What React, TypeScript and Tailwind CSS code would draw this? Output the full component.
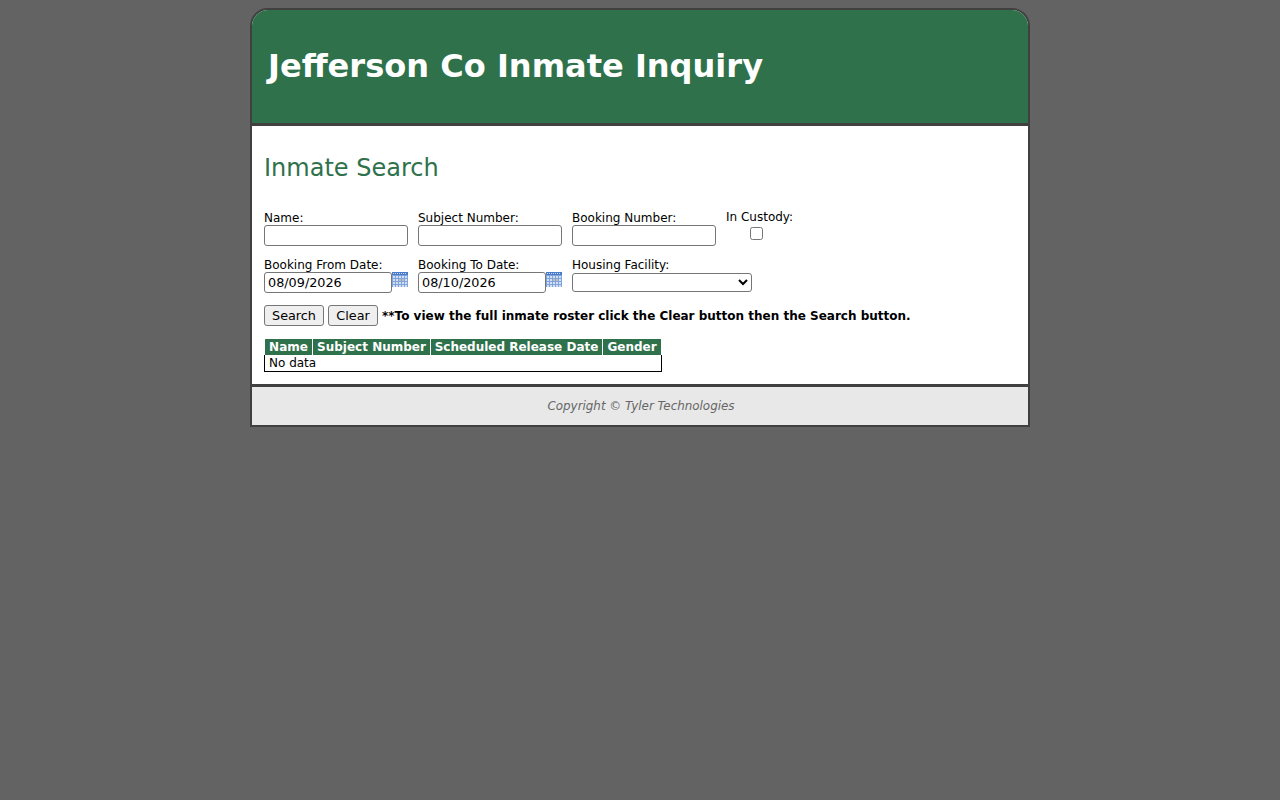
export default function App() {
  const Cal = () => (
    <svg width="16" height="16" viewBox="0 0 16 16" className="block" shapeRendering="crispEdges">
      <rect x="0" y="0" width="16" height="15" fill="#7fa3dc" />
      <rect x="0" y="0" width="16" height="3" fill="#4a7bc9" />
      {[1, 3, 5, 7, 9, 11, 13].map((x) => (
        <rect key={x} x={x} y="1" width="1" height="1" fill="#c9dcf7" />
      ))}
      {[4, 7, 10, 13].map((y) =>
        [1, 4, 7, 10, 13].map((x) => (
          <rect key={`${x}-${y}`} x={x} y={y} width="2" height="2" fill={(x === 10 || x === 7) && y === 7 ? "#c4bfb0" : "#d3e0f3"} />
        ))
      )}
    </svg>
  );
  const input = "block h-[21px] border border-[#767676] rounded-[3px] bg-white px-[3px] text-[12.8px] text-black outline-none";
  return (
    <div className="min-h-[800px] bg-[#636363] pt-2 text-[12px] leading-[15px] text-black font-['DejaVu_Sans',sans-serif]">
      <div className="mx-auto w-[780px] border-2 border-[#404040] rounded-t-[18px] bg-white">
        <div className="flex h-[113px] items-center rounded-t-[16px] bg-[#2f714b] pb-[1px] pl-[15px]">
          <h1 className="pl-[1px] text-[32.05px] font-bold leading-[38px] text-white">Jefferson Co Inmate Inquiry</h1>
        </div>
        <div className="h-[3px] bg-[#404040]" />
        <div className="h-[258px] px-3 pt-[26px]">
          <h2 className="text-[24px] leading-[32px] text-[#2f714b]">Inmate Search</h2>
          <div className="mt-[25px] flex items-start gap-[10px]">
            <label className="block w-[144px] pt-[2px] leading-[14px]">Name:<input className={`${input} w-[144px]`} /></label>
            <label className="block w-[144px] pt-[2px] leading-[14px]">Subject Number:<input className={`${input} w-[144px]`} /></label>
            <label className="block w-[144px] pt-[2px] leading-[14px]">Booking Number:<input className={`${input} w-[144px]`} /></label>
            <label className="block pt-[1px] leading-[14px]">
              In Custody:
              <input type="checkbox" className="ml-[24px] mt-[3px] block h-[13px] w-[13px] appearance-auto" />
            </label>
          </div>
          <div className="mt-[11px] flex items-start gap-[10px]">
            <div className="w-[144px] pt-[1px] leading-[14px]">
              Booking From Date:
              <div className="flex items-start">
                <input defaultValue="08/09/2026" className={`${input} w-[128px]`} />
                <Cal />
              </div>
            </div>
            <div className="w-[144px] pt-[1px] leading-[14px]">
              Booking To Date:
              <div className="flex items-start">
                <input defaultValue="08/10/2026" className={`${input} w-[128px]`} />
                <Cal />
              </div>
            </div>
            <label className="block pt-[1px]">
              Housing Facility:
              <select className="block h-[19px] w-[180px] appearance-auto border border-[#767676] rounded-[3px] bg-white text-[12.8px]">
                <option></option>
              </select>
            </label>
          </div>
          <div className="mt-[12px] flex items-center gap-1">
            <button className="h-[21px] w-[60px] rounded-[3px] border border-[#767676] bg-[#efefef] text-[12.8px] text-black">Search</button>
            <button className="h-[21px] w-[50px] rounded-[3px] border border-[#767676] bg-[#efefef] text-[12.8px] text-black">Clear</button>
            <b className="pt-[1px]">**To view the full inmate roster click the Clear button then the Search button.</b>
          </div>
          <table className="mt-[13px] w-[398px] table-fixed border-separate border-spacing-0 whitespace-nowrap text-[12px] leading-[15px]">
            <thead>
              <tr className="text-white">
                <th className="h-[16px] w-[48px] border-l border-white bg-[#2f714b] p-0 font-bold">Name</th>
                <th className="w-[118px] border-l border-white bg-[#2f714b] p-0 font-bold">Subject Number</th>
                <th className="w-[172px] border-l border-white bg-[#2f714b] p-0 font-bold">Scheduled Release Date</th>
                <th className="w-[60px] border-x border-white bg-[#2f714b] p-0 font-bold">Gender</th>
              </tr>
            </thead>
            <tbody>
              <tr>
                <td colSpan={4} className="h-[17px] border border-t-0 border-black py-0 pl-1">No data</td>
              </tr>
            </tbody>
          </table>
        </div>
        <div className="h-[3px] bg-[#404040]" />
        <div className="flex h-[38px] items-center justify-center bg-[#e8e8e8] pl-[2px] text-[11.9px] italic text-[#666666]">
          Copyright © Tyler Technologies
        </div>
      </div>
    </div>
  );
}
